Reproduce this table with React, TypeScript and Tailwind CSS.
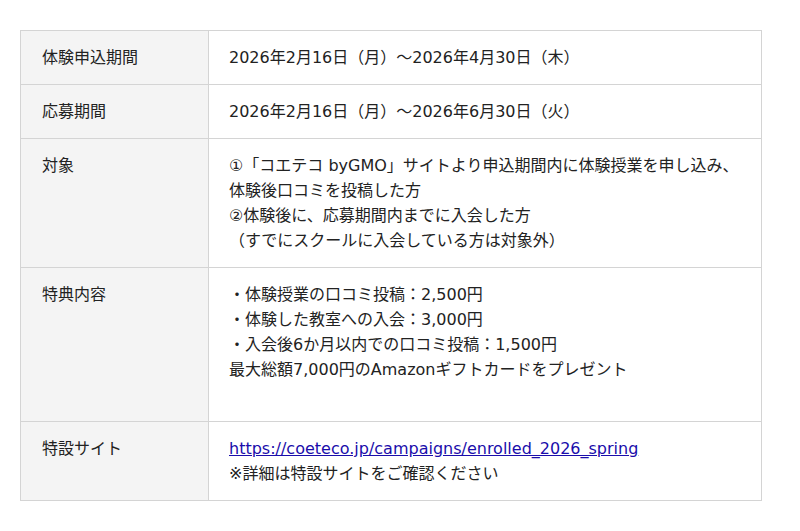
import React from "react";

const rows: { label: string; content: React.ReactNode }[] = [
  { label: "体験申込期間", content: <>2026年2月16日（月）～2026年4月30日（木）</> },
  { label: "応募期間", content: <>2026年2月16日（月）～2026年6月30日（火）</> },
  {
    label: "対象",
    content: (
      <>
        ①「コエテコ byGMO」サイトより申込期間内に体験授業を申し込み、
        <br />
        体験後口コミを投稿した方
        <br />
        ②体験後に、応募期間内までに入会した方
        <br />
        （すでにスクールに入会している方は対象外）
      </>
    ),
  },
  {
    label: "特典内容",
    content: (
      <>
        ・体験授業の口コミ投稿：2,500円
        <br />
        ・体験した教室への入会：3,000円
        <br />
        ・入会後6か月以内での口コミ投稿：1,500円
        <br />
        最大総額7,000円のAmazonギフトカードをプレゼント
        <br />
        <br />
      </>
    ),
  },
  {
    label: "特設サイト",
    content: (
      <>
        <a href="#" className="text-[#1a0dab] underline">
          https://coeteco.jp/campaigns/enrolled_2026_spring
        </a>
        <br />
        ※詳細は特設サイトをご確認ください
      </>
    ),
  },
];

export default function App() {
  return (
    <div
      className="bg-white w-[800px] h-[531px] pt-[30px] px-[20px] text-[16px] leading-[25px] text-[#222]"
      style={{ fontFamily: '"DejaVu Sans", "Noto Sans CJK JP", sans-serif' }}
    >
      <table className="w-[742px] border-collapse">
        <tbody>
          {rows.map((r) => (
            <tr key={r.label}>
              <th className="w-[188px] align-top text-left font-normal bg-[#f4f4f4] border border-[#d4d4d4] px-[21px] py-[14px]">
                {r.label}
              </th>
              <td className="align-top border border-[#d4d4d4] px-[20px] py-[14px]">{r.content}</td>
            </tr>
          ))}
        </tbody>
      </table>
    </div>
  );
}
